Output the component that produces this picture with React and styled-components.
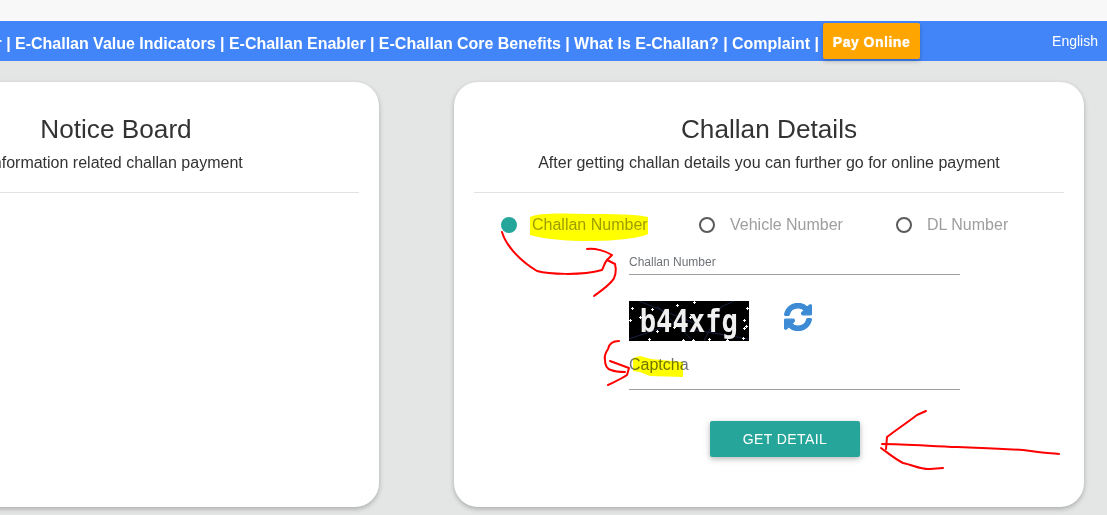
import React from "react";
import styled, { createGlobalStyle } from "styled-components";
import { FaSyncAlt } from "react-icons/fa";

const GlobalStyle = createGlobalStyle`
  html, body {
    margin: 0;
    height: 515px;
    overflow: hidden;
    background: #e4e6e5;
    font-family: "Liberation Sans", Arial, sans-serif;
  }
`;

const Page = styled.div`
  position: relative;
  width: 1107px;
  height: 515px;
  overflow: hidden;
`;

const TopStrip = styled.div`
  height: 21px;
  background: #f8f8f8;
`;

const NavBar = styled.div`
  display: flex;
  align-items: center;
  height: 40px;
  background: #4285f9;
  color: #fff;
`;

const NavLinks = styled.div`
  display: flex;
  justify-content: flex-end;
  box-sizing: border-box;
  width: 823px;
  padding: 5px 4px 0 0;
  overflow: hidden;
  white-space: nowrap;
  font-size: 16px;
  font-weight: bold;
  word-spacing: -0.1px;
  flex-shrink: 0;
`;

const PayButton = styled.button`
  width: 97px;
  height: 36px;
  padding: 1px 0 0;
  border: 0;
  border-radius: 2px;
  background: #ffa500;
  color: #fff;
  font-family: inherit;
  font-size: 14px;
  font-weight: bold;
  letter-spacing: 0.5px;
  text-shadow: 0 0 1px #fff;
  box-shadow: 0 2px 4px rgba(0, 0, 0, 0.25);
`;

const Language = styled.span`
  margin-left: auto;
  margin-right: 9px;
  font-size: 14px;
`;

const Cards = styled.div`
  display: flex;
  gap: 75px;
  margin: 21px 0 0 -147px;
`;

const Card = styled.section`
  flex-shrink: 0;
  box-sizing: border-box;
  width: ${({ $wide }) => ($wide ? "630px" : "526px")};
  height: 425px;
  padding: 30px 20px 0;
  background: #fff;
  border-radius: 24px;
  box-shadow: 0 2px 5px rgba(0, 0, 0, 0.25);
  color: #333;
`;

const CardHead = styled.header`
  padding-bottom: 19px;
  border-bottom: 1px solid #e2e2e2;
  text-align: center;
`;

const CardTitle = styled.h2`
  margin: 0 0 7px;
  font-size: 26.2px;
  font-weight: normal;
  line-height: 34px;
`;

const CardText = styled.p`
  margin: 0;
  font-size: 16px;
  line-height: 20px;
  white-space: nowrap;
`;

const RadioRow = styled.div`
  display: flex;
  margin: 22px 0 0 27px;
  height: 20px;
`;

const RadioOption = styled.label`
  display: flex;
  align-items: center;
  gap: 15px;
  width: ${({ $width }) => $width}px;
  font-size: 16px;
  line-height: 20px;
  color: #9e9e9e;
`;

const RadioDot = styled.span`
  box-sizing: border-box;
  width: 16px;
  height: 16px;
  border-radius: 50%;
  border: 2px solid ${({ $on }) => ($on ? "#26a69a" : "#5a5a5a")};
  background: ${({ $on }) => ($on ? "#26a69a" : "transparent")};
`;

const Form = styled.div`
  width: 331px;
  margin-left: 155px;
`;

const Field = styled.div`
  margin-top: ${({ $top }) => $top}px;
  padding-bottom: ${({ $bottom }) => $bottom}px;
  border-bottom: 1px solid #9e9e9e;
  font-size: ${({ $size }) => $size}px;
  line-height: ${({ $line }) => $line}px;
  color: #6f7378;
`;

const CaptchaRow = styled.div`
  display: flex;
  margin-top: 26px;
  height: 40px;
`;

const CaptchaBox = styled.div`
  position: relative;
  display: flex;
  align-items: center;
  justify-content: center;
  width: 120px;
  height: 40px;
  background: #000;
  overflow: hidden;
`;

const CaptchaText = styled.span`
  position: relative;
  font-family: "DejaVu Sans Mono", "Liberation Mono", monospace;
  font-size: 32px;
  font-weight: bold;
  line-height: 40px;
  color: #f0f0f0;
  transform: scaleX(0.85);
`;

const CaptchaNoise = styled.svg`
  position: absolute;
  inset: 0;
`;

const RefreshIcon = styled(FaSyncAlt)`
  margin: 2px 0 0 35px;
  font-size: 28px;
  color: #3d8bd4;
  stroke: currentColor;
  stroke-width: 24;
`;

const SubmitButton = styled.button`
  display: block;
  width: 150px;
  height: 36px;
  margin: 31px 0 0 81px;
  padding: 0;
  border: 0;
  border-radius: 2px;
  background: #26a69a;
  color: #fff;
  font-family: inherit;
  font-size: 14px;
  letter-spacing: 0.4px;
  text-transform: uppercase;
  box-shadow: 0 2px 5px rgba(0, 0, 0, 0.2), 0 2px 10px rgba(0, 0, 0, 0.1);
`;

const Highlights = styled.svg`
  position: absolute;
  top: 0;
  left: 0;
  mix-blend-mode: multiply;
  pointer-events: none;
`;

const Scribbles = styled.svg`
  position: absolute;
  top: 0;
  left: 0;
  pointer-events: none;
`;

const noiseDots = [
  [3, 7], [1, 19], [11, 16], [23, 8], [48, 4], [65, 1], [118, 7], [115, 19],
  [117, 25], [115, 27], [61, 16], [45, 26], [20, 38], [54, 39], [64, 39], [80, 38],
  [98, 39], [114, 37], [28, 30],
];

const noiseLines = [
  "M10 0 L70 24",
  "M0 38 L52 20",
  "M75 40 L92 6 L105 0",
  "M60 28 L120 38",
  "M28 5 L62 38",
];

const Captcha = () => (
  <CaptchaBox>
    <CaptchaNoise width="120" height="40">
      {noiseLines.map((d) => (
        <path key={d} d={d} stroke="#1c2240" strokeWidth="1" fill="none" />
      ))}
    </CaptchaNoise>
    <CaptchaText>b44xfg</CaptchaText>
    <CaptchaNoise width="120" height="40">
      {noiseDots.map(([x, y]) => (
        <path
          key={`${x}-${y}`}
          d={`M${x - 1} ${y + 0.5}h3M${x + 0.5} ${y - 1}v3`}
          stroke="#fff"
          strokeWidth="1"
          shapeRendering="crispEdges"
        />
      ))}
    </CaptchaNoise>
  </CaptchaBox>
);

const App = () => {
  return (
    <Page>
      <GlobalStyle />
      <TopStrip />
      <NavBar>
        <NavLinks>
          E-Challan Center | E-Challan Value Indicators | E-Challan Enabler | E-Challan Core Benefits | What Is E-Challan? | Complaint |
        </NavLinks>
        <PayButton>Pay Online</PayButton>
        <Language>English</Language>
      </NavBar>

      <Cards>
        <Card>
          <CardHead>
            <CardTitle>Notice Board</CardTitle>
            <CardText>information related challan payment</CardText>
          </CardHead>
        </Card>

        <Card $wide>
          <CardHead>
            <CardTitle>Challan Details</CardTitle>
            <CardText>After getting challan details you can further go for online payment</CardText>
          </CardHead>

          <RadioRow>
            <RadioOption $width={198}><RadioDot $on />Challan Number</RadioOption>
            <RadioOption $width={197}><RadioDot />Vehicle Number</RadioOption>
            <RadioOption $width={150}><RadioDot />DL Number</RadioOption>
          </RadioRow>

          <Form>
            <Field $top={19} $bottom={4} $size={12} $line={16}>Challan Number</Field>
            <CaptchaRow>
              <Captcha />
              <RefreshIcon />
            </CaptchaRow>
            <Field $top={14} $bottom={14} $size={16} $line={20}>Captcha</Field>
            <SubmitButton>Get Detail</SubmitButton>
          </Form>
        </Card>
      </Cards>

      <Highlights width="1107" height="515">
        <path
          d="M530 217 C536 213 560 213 585 214 C610 214 635 214 648 217 L648 234 C640 238 615 241 590 241 C565 241 545 239 530 235 Z"
          fill="#ffff00"
        />
        <path d="M633 358 L640 356 L651 359 L683 362 L683 377 L650 376 L640 372 L633 371 Z" fill="#ffff00" />
      </Highlights>

      <Scribbles width="1107" height="515" fill="none" stroke="#ff0000" strokeWidth="2" strokeLinecap="round" strokeLinejoin="round">
        <path d="M502 232 C505 243 517 259 537 271 C548 274 580 276 602 270 C604 266 605 262 607 260 C609 258 611 256 612 255 C606 251 595 248 587 249" />
        <path d="M607 260 L615 264 C617 271 615 278 612 281 C606 288 599 292 594 296" />
        <path d="M619 341 C613 341 609 344 608 349 C606 352 604 356 605 360 C605 366 607 369 611 370 C616 372 622 372 625 372" />
        <path d="M610 361 L629 368 L627 375 C621 379 614 382 608 385" />
        <path d="M926 411 L917 415 C908 422 896 430 887 437 L886 449" />
        <path d="M882 444 C905 444 930 446 957 447 C985 448 1005 449 1023 450 C1035 452 1048 453 1059 454" />
        <path d="M881 448 C888 453 895 459 903 463 C913 465 922 470 930 469 L943 468" />
      </Scribbles>
    </Page>
  );
};

export default App;
